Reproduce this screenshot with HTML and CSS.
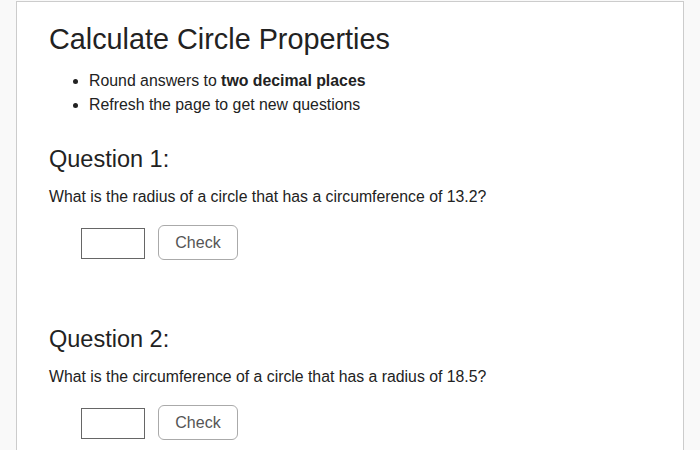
FILE: index.html
```html
<!DOCTYPE html>
<html>
<head>
<meta charset="utf-8">
<link rel="stylesheet" href="styles.css">
</head>
<body>
<div class="card">
  <h1 class="title">Calculate Circle Properties</h1>
  <ul class="notes">
    <li>Round answers to <strong>two decimal places</strong></li>
    <li>Refresh the page to get new questions</li>
  </ul>
  <section class="question">
    <h2 class="q-title">Question 1:</h2>
    <p class="q-text">What is the radius of a circle that has a circumference of 13.2?</p>
    <div class="answer">
      <input class="answer-input" type="text">
      <button class="check-btn">Check</button>
    </div>
  </section>
  <section class="question">
    <h2 class="q-title">Question 2:</h2>
    <p class="q-text">What is the circumference of a circle that has a radius of 18.5?</p>
    <div class="answer">
      <input class="answer-input" type="text">
      <button class="check-btn">Check</button>
    </div>
  </section>
</div>
</body>
</html>
```
FILE: styles.css
```css
html, body {
  margin: 0;
  padding: 0;
  background: #f9f9f9;
  font-family: "Liberation Sans", Arial, sans-serif;
  color: #222;
}
body {
  padding-top: 1px;
}
.card {
  margin: 0 16px;
  background: #fff;
  border: 1px solid #ccc;
  padding: 17px 32px 40px;
  min-height: 600px;
}
.title {
  font-size: 28.8px;
  font-weight: normal;
  margin: 0 0 10px;
  line-height: 40px;
}
.notes {
  margin: 0;
  padding-left: 40px;
  font-size: 15.85px;
  line-height: 24px;
}
.question {
  margin-top: 26px;
  height: 154px;
}
.q-title {
  font-size: 23.5px;
  font-weight: normal;
  margin: 0;
  line-height: 32px;
}
.q-text {
  font-size: 15.8px;
  margin: 10px 0 0;
  line-height: 24px;
}
.answer {
  display: flex;
  align-items: flex-start;
  gap: 13px;
  margin-top: 16px;
  padding-left: 32px;
}
.answer-input {
  width: 64px;
  height: 31px;
  box-sizing: border-box;
  border: 1px solid #666;
  margin: 3px 0 0;
  padding: 0 4px;
  font-size: 16px;
}
.check-btn {
  width: 80px;
  height: 35px;
  border: 1px solid #aaa;
  border-radius: 6px;
  background: #fff;
  color: #555;
  font-family: "Liberation Sans", Arial, sans-serif;
  font-size: 16px;
  padding: 0;
}
```
